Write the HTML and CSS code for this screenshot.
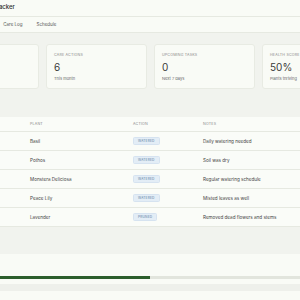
FILE: index.html
```html
<!DOCTYPE html>
<html>
<head>
<meta charset="utf-8">
<link rel="stylesheet" href="styles.css">
</head>
<body>
<div class="page">
  <header class="top">
    <h1 class="title">Plant Tracker</h1>
  </header>
  <nav class="tabs">
    <a class="tab">Dashboard</a>
    <a class="tab">Care Log</a>
    <a class="tab">Schedule</a>
  </nav>
  <main class="content">
    <section class="stats">
      <div class="card"><div class="label">Total Plants</div><div class="value">5</div><div class="sub">In collection</div></div>
      <div class="card"><div class="label">Care Actions</div><div class="value">6</div><div class="sub">This month</div></div>
      <div class="card"><div class="label">Upcoming Tasks</div><div class="value">0</div><div class="sub">Next 7 days</div></div>
      <div class="card"><div class="label">Health Score</div><div class="value">50%</div><div class="sub">Plants thriving</div></div>
    </section>
    <section class="log">
      <table class="table">
        <colgroup><col class="c-date"><col class="c-plant"><col class="c-action"><col class="c-notes"></colgroup>
        <thead>
          <tr><th>Date</th><th>Plant</th><th>Action</th><th>Notes</th></tr>
        </thead>
        <tbody>
          <tr><td>Jun 12</td><td>Basil</td><td><span class="badge">Watered</span></td><td>Daily watering needed</td></tr>
          <tr><td>Jun 11</td><td>Pothos</td><td><span class="badge">Watered</span></td><td>Soil was dry</td></tr>
          <tr><td>Jun 10</td><td>Monstera Deliciosa</td><td><span class="badge">Watered</span></td><td>Regular watering schedule</td></tr>
          <tr><td>Jun 09</td><td>Peace Lily</td><td><span class="badge">Watered</span></td><td>Misted leaves as well</td></tr>
          <tr><td>Jun 08</td><td>Lavender</td><td><span class="badge">Pruned</span></td><td>Removed dead flowers and stems</td></tr>
        </tbody>
      </table>
    </section>
  </main>
  <footer class="foot">
    <div class="progress"><div class="fill" style="width:50%"></div></div>
    <div class="band"></div>
  </footer>
</div>
</body>
</html>
```
FILE: styles.css
```css
html, body {
  margin: 0;
  padding: 0;
  background: #f1f3ee;
  overflow: hidden;
  font-family: "Inter", "Noto Sans", sans-serif;
  color: #333;
}
.page {
  margin-left: -70px;
  width: 441px;
}
.top {
  height: 17px;
  box-sizing: border-box;
  background: #f9fbf6;
  border-bottom: 1px solid #e6e9e1;
  display: flex;
  align-items: flex-start;
  padding: 3px 0 0 47px;
}
.title {
  margin: 0;
  font-size: 6px;
  line-height: 7px;
  font-weight: 500;
  color: #2a2a2a;
}
.tabs {
  height: 16px;
  box-sizing: border-box;
  background: #f9fbf6;
  border-bottom: 1px solid #e6e9e1;
  display: flex;
  align-items: center;
  gap: 14px;
  padding-left: 36px;
}
.tab {
  font-size: 4.5px;
  color: #555;
}
.content {
  padding: 11px 8px 27px;
}
.stats {
  display: grid;
  grid-template-columns: repeat(4, 101px);
  gap: 7px;
}
.card {
  height: 45px;
  box-sizing: border-box;
  background: #f9fbf6;
  border: 1px solid #e8ebe3;
  border-radius: 3px;
  padding: 7px 7px 0;
}
.label {
  font-size: 3.6px;
  letter-spacing: 0.2px;
  text-transform: uppercase;
  color: #888;
  line-height: 6px;
}
.value {
  font-size: 10px;
  line-height: 12px;
  margin-top: 3px;
  color: #3a3a3a;
}
.sub {
  font-size: 4px;
  color: #666;
  margin-top: 3px;
  line-height: 6px;
}
.log {
  margin-top: 28px;
  background: #fafcf8;
}
.table {
  width: 100%;
  border-collapse: collapse;
  table-layout: fixed;
}
.c-date { width: 85px; }
.c-plant { width: 103px; }
.c-action { width: 70px; }
.c-notes { width: auto; }
.table th {
  text-align: left;
  font-weight: 400;
  font-size: 3.6px;
  letter-spacing: 0.2px;
  text-transform: uppercase;
  color: #888;
  height: 14px;
  padding: 0 7px;
  border-bottom: 1px solid #e6e9e1;
}
.table td {
  font-size: 4.6px;
  color: #444;
  height: 18px;
  padding: 0 7px;
  border-bottom: 1px solid #e6e9e1;
}
.badge {
  display: inline-block;
  font-size: 3.2px;
  letter-spacing: 0.2px;
  text-transform: uppercase;
  color: #5a7da0;
  background: #e3edf6;
  border: 1px solid #d6e3f0;
  border-radius: 1.5px;
  padding: 1px 4px;
  line-height: 4px;
}
.foot {
  background: #f9fbf6;
  height: 60px;
  padding-top: 22px;
  box-sizing: border-box;
}
.progress {
  height: 3px;
  background: #e2e5dd;
  margin-left: 70px;
  width: 300px;
}
.fill {
  height: 100%;
  background: #2c5e2c;
}
.band {
  height: 7px;
  margin-top: 5px;
  background: #eef0eb;
}
```
